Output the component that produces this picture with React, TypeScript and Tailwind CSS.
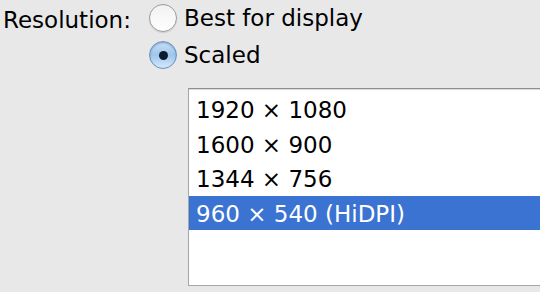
import React, { useState } from 'react';

const options = ['1920 × 1080', '1600 × 900', '1344 × 756', '960 × 540 (HiDPI)'];

const Radio: React.FC<{ checked: boolean }> = ({ checked }) =>
  checked ? (
    <span className="flex h-[28px] w-[28px] shrink-0 items-center justify-center rounded-full border border-[#6b93bf] bg-gradient-to-b from-[#c9e0f5] via-[#9fc6ec] to-[#d6e9fa] shadow-[inset_0_1px_2px_rgba(40,80,140,0.45)]">
      <span className="h-[9px] w-[9px] rounded-full bg-[#0d1b30]" />
    </span>
  ) : (
    <span className="h-[28px] w-[28px] shrink-0 rounded-full border border-[#9c9c9c] bg-gradient-to-b from-[#f2f2f2] to-white shadow-[0_1px_1px_rgba(0,0,0,0.12)]" />
  );

export default function App() {
  const [mode, setMode] = useState<'best' | 'scaled'>('scaled');
  const [selected, setSelected] = useState(3);

  return (
    <div className="h-[292px] w-[540px] overflow-hidden bg-[#e8e8e8] text-[23px] leading-none text-black [font-family:'DejaVu_Sans',sans-serif]">
      <div className="grid grid-cols-[149px_1fr] pt-[4px]">
        <div className="pl-[3px] pt-[5px]">Resolution:</div>
        <div className="flex flex-col gap-[9px]">
          <button className="flex h-[28px] items-center gap-[7px]" onClick={() => setMode('best')}>
            <Radio checked={mode === 'best'} />
            <span>Best for display</span>
          </button>
          <button className="flex h-[28px] items-center gap-[7px]" onClick={() => setMode('scaled')}>
            <Radio checked={mode === 'scaled'} />
            <span>Scaled</span>
          </button>
          <div className="ml-[39px] mt-[10px] h-[198px] w-[380px] border border-[#a6a6a6] border-t-[#8e8e8e] bg-white pt-[3px] shadow-[inset_0_1px_1px_rgba(0,0,0,0.15)]">
            {options.map((o, i) => (
              <div
                key={o}
                onClick={() => setSelected(i)}
                className={`flex h-[34.5px] items-center pl-[7px] pt-[3px] ${
                  i === selected ? 'bg-[#3a73d2] text-white' : ''
                }`}
              >
                {o}
              </div>
            ))}
          </div>
        </div>
      </div>
    </div>
  );
}
